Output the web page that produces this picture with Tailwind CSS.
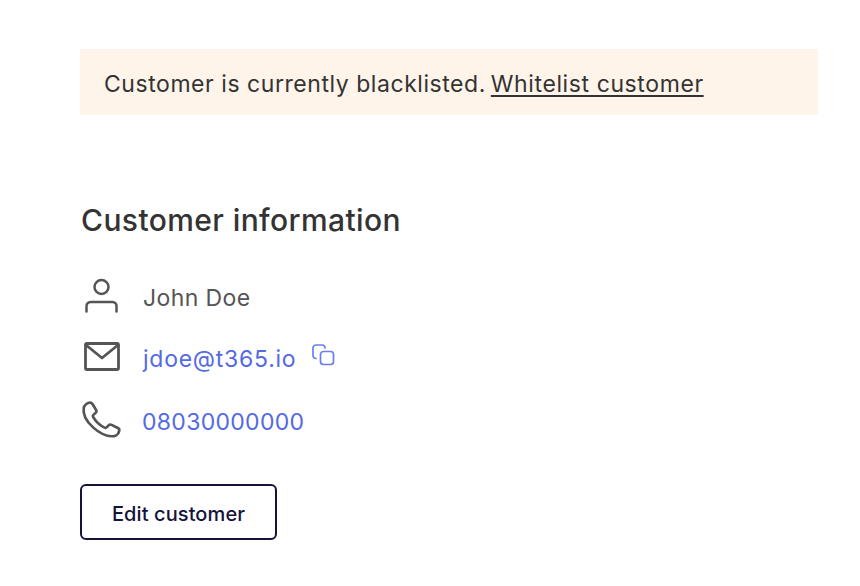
<!DOCTYPE html>
<html lang="en">
<head>
    <meta charset="UTF-8">
    <meta name="viewport" content="width=device-width, initial-scale=1.0">
    <title>Customer information</title>
    <script src="https://cdn.jsdelivr.net/npm/@tailwindcss/browser@4"></script>
</head>
<body>
    <div class="bg-white font-['Inter',sans-serif] h-[586px] pl-20 pt-[49px] overflow-hidden">
        <div class="w-[738px] h-[66px] bg-[#fff4e9] pl-6 pt-1 flex items-center text-[#333333] text-[23px] tracking-[0.55px] whitespace-nowrap">
            <span>Customer is currently blacklisted.</span>
            <a href="#" class="ml-[5px] tracking-[0.6px] underline decoration-2 underline-offset-[3px]">Whitelist customer</a>
        </div>

        <h2 class="mt-[85px] pl-px h-10 flex items-center text-[#333333] text-[30px] tracking-[0.4px] font-medium">Customer information</h2>

        <div class="mt-[37px] flex flex-col text-[23px]">
            <div class="h-[42px] flex items-center gap-[21px] text-[#555555] tracking-[0.4px]">
                <svg class="w-[42px] h-[42px] shrink-0" viewBox="0 0 42 42" fill="none" stroke="#555555" stroke-width="2.5" stroke-linecap="round" stroke-linejoin="round">
                    <circle cx="21.500" cy="10" r="7"/>
                    <path d="M6.500 34.500v-5.500a4 4 0 0 1 4-4h22a4 4 0 0 1 4 4v5.500"/>
                </svg>
                <span>John Doe</span>
            </div>
            <div class="mt-[19px] h-[42px] flex items-center gap-[21px] text-[#5469e4] tracking-[0.75px]">
                <svg class="w-[42px] h-[42px] shrink-0" viewBox="0 0 42 42" fill="none" stroke="#555555" stroke-width="2.8" stroke-linecap="round" stroke-linejoin="round">
                    <rect x="5.500" y="5.500" width="33" height="26" rx="1.500"/>
                    <path d="M6 7l16 13L38 7"/>
                </svg>
                <span>jdoe@t365.io</span>
                <svg class="w-6 h-6 shrink-0 -ml-[6px] -mt-2" viewBox="0 0 24 24" fill="none" stroke="#6b7fe8" stroke-width="1.7" stroke-linecap="round" stroke-linejoin="round">
                    <rect x="9.500" y="8.500" width="13" height="13" rx="3"/>
                    <path d="M5 15.500a3 3 0 0 1-3-3V5a3 3 0 0 1 3-3h6a3 3 0 0 1 3 3"/>
                </svg>
            </div>
            <div class="mt-[21px] h-[42px] flex items-center gap-5 text-[#5469e4] tracking-[0.3px]">
                <svg class="w-[42px] h-[42px] shrink-0" viewBox="0 0 42 42" fill="none" stroke="#555555" stroke-width="2.5" stroke-linecap="round" stroke-linejoin="round">
                    <path transform="translate(0 -1.500) scale(1.09 1.04)" d="M3.500 7.500c1-2.500 3.500-4.500 5.500-4.500 1.200 0 2 .6 2.600 1.600l3.100 5.400c.6 1 .4 2-.4 2.800l-2 2c-.6.6-.7 1.300-.3 2 2 3.700 5.600 7.900 10.500 10.200.8.400 1.500.3 2-.3l1.700-1.800c.8-.8 1.800-1 2.800-.5l5.700 3c1 .5 1.500 1.300 1.300 2.400-.3 2.300-2 5-4.500 5.400C20 37 1 21 3.500 7.500z"/>
                </svg>
                <span>08030000000</span>
            </div>
        </div>

        <button class="mt-[41px] w-[197px] h-14 rounded-md border-2 border-[#15133a] text-[#15133a] text-[20px] tracking-[0.1px] pt-1 font-medium">Edit customer</button>
    </div>
</body>
</html>
